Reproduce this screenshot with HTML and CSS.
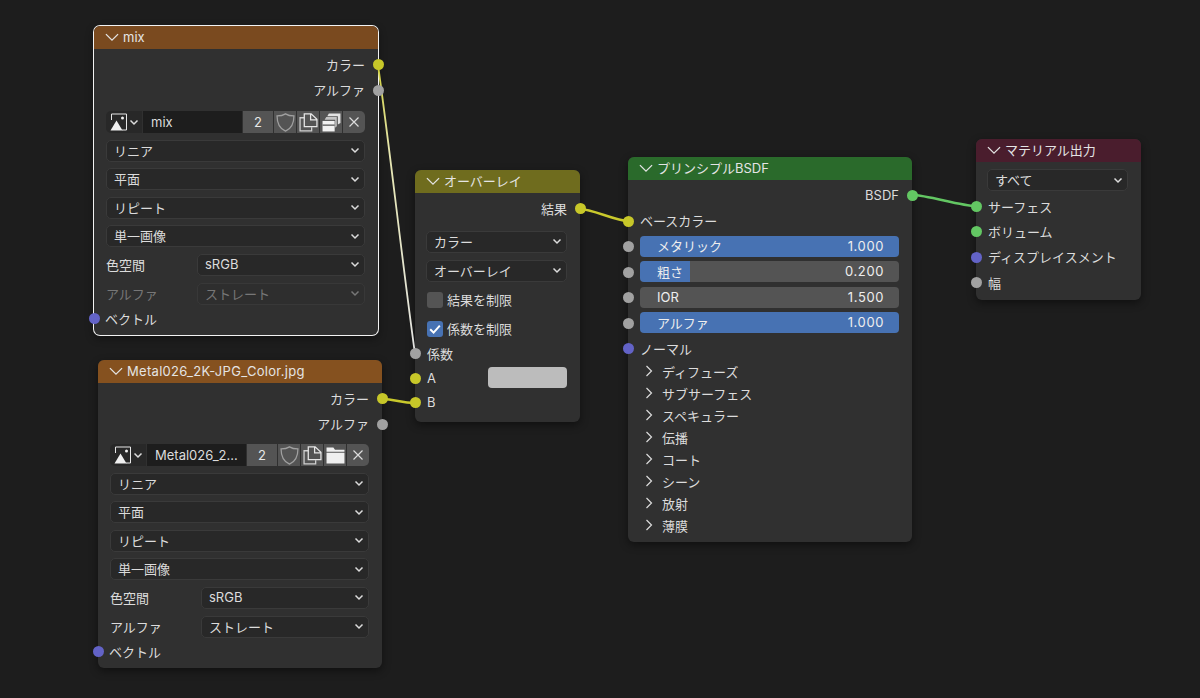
FILE: index.html
```html
<!DOCTYPE html>
<html lang="ja">
  <head>
    <meta charset="UTF-8" />
    <title>Node Editor</title>
    <link rel="stylesheet" href="styles.css">
  </head>
  <body>
    <svg width="0" height="0" class="defs">
      <defs>
        <linearGradient id="fac_link" gradientUnits="userSpaceOnUse" x1="378" y1="65" x2="415" y2="354">
          <stop offset="0" stop-color="#cfcf3a" />
          <stop offset="0.3" stop-color="#e6e6b0" />
          <stop offset="1" stop-color="#e4e4e4" />
        </linearGradient>
        <symbol id="i_down" viewBox="0 0 12 12"><path d="M0.8 3.5 6 8.7 11.2 3.5" fill="none" stroke="currentColor" stroke-width="1.1" /></symbol>
        <symbol id="i_right" viewBox="0 0 12 12"><path d="M3.5 1 8.5 6 3.5 11" fill="none" stroke="currentColor" stroke-width="1.2" /></symbol>
        <symbol id="i_small" viewBox="0 0 10 10"><path d="M1.5 3.5 5 7 8.5 3.5" fill="none" stroke="currentColor" stroke-width="1.5" /></symbol>
        <symbol id="i_image" viewBox="0 0 18 18"><path d="M1.5 7V1H16.5V17H12" fill="none" stroke="#e6e6e6" stroke-width="1" /><path d="M0.5 17.5 6.5 7.5 12.5 17.5Z" fill="#f0f0f0" /><circle cx="12.5" cy="5" r="1.5" fill="#f0f0f0" /></symbol>
        <symbol id="i_shield" viewBox="0 0 18 18"><path d="M9 0.8C11.5 2.4 14 2.8 17 2.8 17 10 14.5 14.8 9 17.2 3.5 14.8 1 10 1 2.8 4 2.8 6.5 2.4 9 0.8Z" fill="none" stroke="#a0a0a0" stroke-width="1.2" /></symbol>
        <symbol id="i_copy" viewBox="0 0 18 18"><path d="M5 4.5H1V17H12V13.5" fill="none" stroke="#d0d0d0" stroke-width="1.2" /><path d="M5 0.8H11.5L17 6V13H5Z M11 1V6.5H16.8" fill="none" stroke="#e6e6e6" stroke-width="1.2" /></symbol>
        <symbol id="i_stack" viewBox="0 0 18 18"><path d="M5 3 6.5 0.5H17.5V9.5L15 11V3Z" fill="#e2e2e2" /><path d="M2.5 6.5 4 3.8H14V12.5L12.5 14V6.5Z" fill="#c4c4c4" /><path d="M0.5 7.5H12V17.5H0.5Z" fill="#f2f2f2" /><path d="M0.5 11.5H12" stroke="#545454" stroke-width="1.2" /></symbol>
        <symbol id="i_folder" viewBox="0 0 18 18"><path d="M0.5 1.5H7L8.5 3.5H17.5V5.5H0.5Z M0.5 6.5H17.5V16.5H0.5Z" fill="#efefef" /></symbol>
        <symbol id="i_close" viewBox="0 0 12 12"><path d="M1.5 1.5 10.5 10.5M10.5 1.5 1.5 10.5" fill="none" stroke="#dcdcdc" stroke-width="1.2" /></symbol>
      </defs>
    </svg>

    <div class="editor">
      <!-- mix -->
      <div class="node node_mix selected">
        <div class="node_header"><svg class="collapse"><use href="#i_down" /></svg>mix</div>
        <div class="node_body">
          <div class="row right">カラー<i class="socket out yellow"></i></div>
          <div class="row right">アルファ<i class="socket out gray"></i></div>
          <div class="fields">
            <div class="image_row">
              <div class="image_type"><svg class="ico18"><use href="#i_image" /></svg><svg class="ico10"><use href="#i_small" /></svg></div>
              <div class="image_name">mix</div>
              <div class="image_btn users">2</div>
              <div class="image_btn"><svg class="ico19"><use href="#i_shield" /></svg></div>
              <div class="image_btn"><svg class="ico19"><use href="#i_copy" /></svg></div>
              <div class="image_btn"><svg class="ico19"><use href="#i_stack" /></svg></div>
              <div class="image_btn last"><svg class="ico12"><use href="#i_close" /></svg></div>
            </div>
            <div class="select">リニア<svg class="ico10"><use href="#i_small" /></svg></div>
            <div class="select">平面<svg class="ico10"><use href="#i_small" /></svg></div>
            <div class="select">リピート<svg class="ico10"><use href="#i_small" /></svg></div>
            <div class="select">単一画像<svg class="ico10"><use href="#i_small" /></svg></div>
            <div class="prop"><span>色空間</span><div class="select">sRGB<svg class="ico10"><use href="#i_small" /></svg></div></div>
            <div class="prop disabled"><span>アルファ</span><div class="select">ストレート<svg class="ico10"><use href="#i_small" /></svg></div></div>
          </div>
          <div class="row vector_row"><i class="socket in purple"></i>ベクトル</div>
        </div>
      </div>

      <!-- Metal026 -->
      <div class="node node_metal">
        <div class="node_header"><svg class="collapse"><use href="#i_down" /></svg>Metal026_2K-JPG_Color.jpg</div>
        <div class="node_body">
          <div class="row right">カラー<i class="socket out yellow"></i></div>
          <div class="row right">アルファ<i class="socket out gray"></i></div>
          <div class="fields">
            <div class="image_row">
              <div class="image_type"><svg class="ico18"><use href="#i_image" /></svg><svg class="ico10"><use href="#i_small" /></svg></div>
              <div class="image_name">Metal026_2...</div>
              <div class="image_btn users">2</div>
              <div class="image_btn"><svg class="ico19"><use href="#i_shield" /></svg></div>
              <div class="image_btn"><svg class="ico19"><use href="#i_copy" /></svg></div>
              <div class="image_btn"><svg class="ico19"><use href="#i_folder" /></svg></div>
              <div class="image_btn last"><svg class="ico12"><use href="#i_close" /></svg></div>
            </div>
            <div class="select">リニア<svg class="ico10"><use href="#i_small" /></svg></div>
            <div class="select">平面<svg class="ico10"><use href="#i_small" /></svg></div>
            <div class="select">リピート<svg class="ico10"><use href="#i_small" /></svg></div>
            <div class="select">単一画像<svg class="ico10"><use href="#i_small" /></svg></div>
            <div class="prop"><span>色空間</span><div class="select">sRGB<svg class="ico10"><use href="#i_small" /></svg></div></div>
            <div class="prop"><span>アルファ</span><div class="select">ストレート<svg class="ico10"><use href="#i_small" /></svg></div></div>
          </div>
          <div class="row vector_row"><i class="socket in purple"></i>ベクトル</div>
        </div>
      </div>

      <!-- overlay -->
      <div class="node node_overlay">
        <div class="node_header"><svg class="collapse"><use href="#i_down" /></svg>オーバーレイ</div>
        <div class="node_body">
          <div class="row right">結果<i class="socket out yellow"></i></div>
          <div class="overlay_fields">
            <div class="select">カラー<svg class="ico10"><use href="#i_small" /></svg></div>
            <div class="select">オーバーレイ<svg class="ico10"><use href="#i_small" /></svg></div>
          </div>
          <div class="check_row"><span class="checkbox"></span>結果を制限</div>
          <div class="check_row"><span class="checkbox on"><svg viewBox="0 0 16 16"><path d="M3.2 8.2 6.6 11.6 12.8 4.6" fill="none" stroke="#fff" stroke-width="2" /></svg></span>係数を制限</div>
          <div class="row tight first_input"><i class="socket in gray"></i>係数</div>
          <div class="row tight swatch_row"><i class="socket in yellow"></i>A<span class="swatch"></span></div>
          <div class="row tight"><i class="socket in yellow"></i>B</div>
        </div>
      </div>

      <!-- principled -->
      <div class="node node_bsdf">
        <div class="node_header"><svg class="collapse"><use href="#i_down" /></svg>プリンシプルBSDF</div>
        <div class="node_body">
          <div class="row right">BSDF<i class="socket out green"></i></div>
          <div class="row"><i class="socket in yellow"></i>ベースカラー</div>
          <div class="row"><i class="socket in gray"></i><div class="slider full"><span>メタリック</span><span>1.000</span></div></div>
          <div class="row"><i class="socket in gray"></i><div class="slider rough"><span>粗さ</span><span>0.200</span></div></div>
          <div class="row"><i class="socket in gray"></i><div class="slider"><span>IOR</span><span>1.500</span></div></div>
          <div class="row"><i class="socket in gray"></i><div class="slider full"><span>アルファ</span><span>1.000</span></div></div>
          <div class="row"><i class="socket in purple"></i>ノーマル</div>
          <div class="panels">
            <div class="panel"><svg class="ico12"><use href="#i_right" /></svg>ディフューズ</div>
            <div class="panel"><svg class="ico12"><use href="#i_right" /></svg>サブサーフェス</div>
            <div class="panel"><svg class="ico12"><use href="#i_right" /></svg>スペキュラー</div>
            <div class="panel"><svg class="ico12"><use href="#i_right" /></svg>伝播</div>
            <div class="panel"><svg class="ico12"><use href="#i_right" /></svg>コート</div>
            <div class="panel"><svg class="ico12"><use href="#i_right" /></svg>シーン</div>
            <div class="panel"><svg class="ico12"><use href="#i_right" /></svg>放射</div>
            <div class="panel"><svg class="ico12"><use href="#i_right" /></svg>薄膜</div>
          </div>
        </div>
      </div>

      <!-- output -->
      <div class="node node_output">
        <div class="node_header"><svg class="collapse"><use href="#i_down" /></svg>マテリアル出力</div>
        <div class="node_body">
          <div class="overlay_fields output_field">
            <div class="select">すべて<svg class="ico10"><use href="#i_small" /></svg></div>
          </div>
          <div class="row"><i class="socket in green"></i>サーフェス</div>
          <div class="row"><i class="socket in green"></i>ボリューム</div>
          <div class="row"><i class="socket in purple"></i>ディスプレイスメント</div>
          <div class="row"><i class="socket in gray"></i>幅</div>
        </div>
      </div>

      <!-- links -->
      <svg class="links" width="1200" height="698" viewBox="0 0 1200 698">
        <path class="thin" d="M378 65C390 150 402 260 415 354" stroke="url(#fac_link)" />
        <path d="M381 399C396 399 400 403 415 403" stroke="#c9c92c" />
        <path d="M580 209C592 209 616 221 628 221" stroke="#c9c92c" />
        <path d="M912 195C928 195 960 206 976 206" stroke="#63c763" />
      </svg>
    </div>
  </body>
</html>
```

FILE: styles.css
```css
* {
  margin: 0;
  padding: 0;
  box-sizing: border-box;
}

body {
  background-color: #1d1d1d;
  font-family: Inter, "Noto Sans CJK JP", sans-serif;
  font-size: 13px;
  color: #dcdcdc;
  overflow: hidden;
}

.defs {
  position: absolute;
}

.editor {
  position: relative;
  width: 1200px;
  height: 698px;
}

.links {
  position: absolute;
  top: 0;
  left: 0;
  pointer-events: none;

  path {
    fill: none;
    stroke-width: 2.4;
  }

  .thin {
    stroke-width: 1.8;
  }
}

/* nodes sit on a free canvas */
.node {
  position: absolute;
  background-color: #303030;
  border-radius: 6px;
  box-shadow: 0 3px 8px rgba(0, 0, 0, 0.45);
}

.node.selected {
  box-shadow: 0 0 0 1px #f2f2f2, 0 3px 8px rgba(0, 0, 0, 0.45);
}

.node_mix {
  left: 94px;
  top: 26px;
  width: 284px;
  height: 309px;
}

.node_metal {
  left: 98px;
  top: 360px;
  width: 284px;
  height: 308px;
}

.node_overlay {
  left: 415px;
  top: 170px;
  width: 165px;
  height: 252px;
}

.node_bsdf {
  left: 628px;
  top: 157px;
  width: 284px;
  height: 385px;
}

.node_output {
  left: 976px;
  top: 139px;
  width: 165px;
  height: 161px;
}

.node_header {
  height: 23px;
  display: flex;
  align-items: center;
  padding: 0 0 2px 11px;
  gap: 4px;
  border-radius: 6px 6px 0 0;
  color: #e4e4e4;
  white-space: nowrap;
}

.node_mix .node_header {
  background-color: #7a4a1f;
}

.node_metal .node_header {
  background-color: #85511f;
  letter-spacing: 0.3px;
}

.node_overlay .node_header {
  background-color: #6f6c1e;
}

.node_bsdf .node_header {
  background-color: #2a6a2b;
}

.node_output .node_header {
  background-color: #4a1d2d;
}

.collapse {
  width: 14px;
  height: 14px;
  flex: none;
}

.node_body {
  padding-top: 3px;
}

.row {
  position: relative;
  height: 25.5px;
  display: flex;
  align-items: center;
  padding: 0 13px 1px 12px;
  white-space: nowrap;
}

.row.right {
  justify-content: flex-end;
}

.row.tight {
  height: 24.5px;
}

.node_output .row {
  height: 25.3px;
}

.socket {
  position: absolute;
  top: 50%;
  width: 11px;
  height: 11px;
  margin-top: -5.5px;
  border-radius: 50%;
  z-index: 2;
}

.socket.in {
  left: -5.5px;
}

.socket.out {
  right: -5.5px;
}

.yellow {
  background-color: #c7c729;
}

.gray {
  background-color: #a1a1a1;
}

.purple {
  background-color: #6363c7;
}

.green {
  background-color: #63c763;
}

.ico10 {
  width: 10px;
  height: 10px;
  flex: none;
}

.ico12 {
  width: 12px;
  height: 12px;
  flex: none;
}

.ico18 {
  width: 18px;
  height: 18px;
  flex: none;
}

.ico19 {
  width: 19px;
  height: 19px;
  flex: none;
}

.fields {
  display: flex;
  flex-direction: column;
  gap: 6.6px;
  margin-top: 8px;
  padding: 0 13px 0 12px;
}

.node_metal .fields {
  margin-top: 7px;
}

.vector_row {
  margin-top: 1.5px;
  padding-left: 11px;
}

.select {
  height: 22px;
  display: flex;
  align-items: center;
  justify-content: space-between;
  padding: 0 4px 1px 7px;
  background-color: #282828;
  border: 1px solid #3a3a3a;
  border-radius: 5px;
  white-space: nowrap;
}

.prop {
  display: grid;
  grid-template-columns: 91px 1fr;
  align-items: center;

  &.disabled {
    color: #777777;

    .select {
      background-color: #2e2e2e;
      border-color: #383838;
    }
  }
}

.image_row {
  height: 22px;
  display: flex;
  gap: 1px;
}

.image_type {
  width: 36px;
  display: flex;
  align-items: center;
  justify-content: center;
  gap: 1px;
  background-color: #282828;
  border-radius: 5px 0 0 5px;
}

.image_name {
  flex: 1;
  display: flex;
  align-items: center;
  padding-left: 8px;
  background-color: #1d1d1d;
  min-width: 0;
}

.image_btn {
  width: 22px;
  display: flex;
  align-items: center;
  justify-content: center;
  background-color: #545454;
  color: #e8e8e8;
}

.image_btn.users {
  width: 30px;
}

.image_btn.last {
  border-radius: 0 5px 5px 0;
}

.overlay_fields {
  display: flex;
  flex-direction: column;
  gap: 7px;
  margin-top: 9px;
  padding: 0 13px 0 11px;
}

.output_field {
  margin: 4px 0 3px;
}

.check_row {
  height: 22px;
  display: flex;
  align-items: center;
  gap: 4px;
  padding-left: 12px;
  margin-top: 7px;
}

.checkbox {
  width: 16px;
  height: 16px;
  flex: none;
  background-color: #545454;
  border-radius: 3px;

  svg {
    display: block;
  }

  &.on {
    background-color: #4772b3;
  }
}

.first_input {
  margin-top: 2px;
}

.swatch_row {
  justify-content: space-between;
}

.swatch {
  width: 79px;
  height: 21px;
  background-color: #bcbcbc;
  border-radius: 4px;
}

.slider {
  flex: 1;
  height: 21px;
  display: flex;
  align-items: center;
  justify-content: space-between;
  padding: 0 15px 1px 17px;
  background-color: #545454;
  border-radius: 4px;
  color: #eeeeee;

  span:last-child {
    letter-spacing: 0.6px;
  }

  &.full {
    background-color: #4772b3;
  }

  &.rough {
    background: linear-gradient(90deg, #4772b3 50px, #545454 50px);
  }
}

.panels {
  margin-top: -1px;
}

.panel {
  height: 22px;
  display: flex;
  align-items: center;
  gap: 7px;
  padding: 0 0 1px 15px;
  white-space: nowrap;
}
```
